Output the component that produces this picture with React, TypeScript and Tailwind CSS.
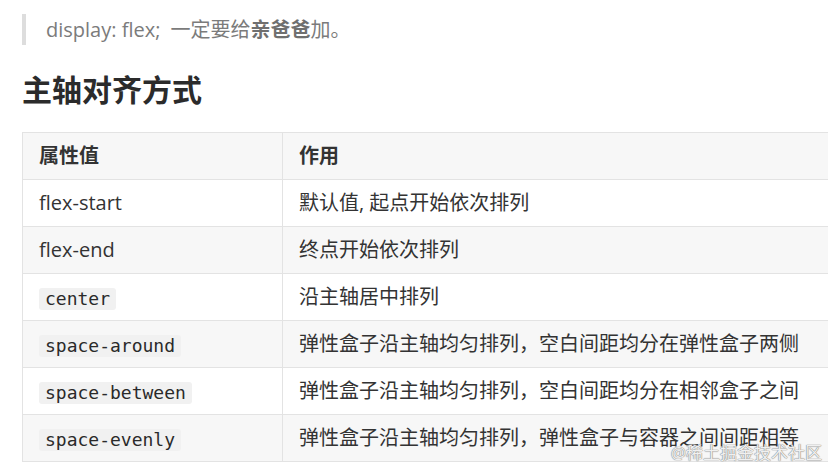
const rows: { name: string; code: boolean; desc: string }[] = [
  { name: "flex-start", code: false, desc: "默认值, 起点开始依次排列" },
  { name: "flex-end", code: false, desc: "终点开始依次排列" },
  { name: "center", code: true, desc: "沿主轴居中排列" },
  { name: "space-around", code: true, desc: "弹性盒子沿主轴均匀排列，空白间距均分在弹性盒子两侧" },
  { name: "space-between", code: true, desc: "弹性盒子沿主轴均匀排列，空白间距均分在相邻盒子之间" },
  { name: "space-evenly", code: true, desc: "弹性盒子沿主轴均匀排列，弹性盒子与容器之间间距相等" },
];

const App = () => {
  return (
    <div className="relative w-[828px] h-[472px] overflow-hidden bg-white font-['Open_Sans','Noto_Sans_CJK_SC',sans-serif] text-[#333]">
      {/* blockquote */}
      <div className="ml-[22px] mt-[14px] border-l-4 border-[#dddddd] pl-5 h-[31px] leading-[31px] text-[20px] text-[#7b7b7b]">
        display: flex;<span className="ml-[10px]">一定要给</span>
        <b className="font-bold text-[#6f6f6f]">亲爸爸</b>加。
      </div>

      <h2 className="ml-[22px] mt-[22px] text-[30px] leading-[45px] font-bold text-[#2b2b2b]">主轴对齐方式</h2>

      {/* table */}
      <div className="ml-[22px] mt-[20px] w-[840px] border-t border-l border-[#e3e3e3] text-[20px]">
        <div className="flex h-[47px] border-b border-[#e3e3e3] bg-[#f7f7f7] font-bold">
          <div className="w-[260px] border-r border-[#e3e3e3] pl-[16px] flex items-center">属性值</div>
          <div className="flex-1 pl-[16px] flex items-center">作用</div>
        </div>
        {rows.map((r, i) => (
          <div
            key={r.name}
            className={`flex h-[47px] border-b border-[#e3e3e3] ${i % 2 === 1 ? "bg-[#f7f7f7]" : "bg-white"}`}
          >
            <div className="w-[260px] border-r border-[#e3e3e3] pl-[16px] flex items-center">
              {r.code ? (
                <code className="mt-[4px] rounded-[3px] bg-[#f1f1f1] px-[6px] h-[22px] leading-[22px] text-[18px] font-['DejaVu_Sans_Mono',monospace] text-[#2a2a2a]">
                  {r.name}
                </code>
              ) : (
                r.name
              )}
            </div>
            <div className="flex-1 pl-[16px] flex items-center whitespace-nowrap">{r.desc}</div>
          </div>
        ))}
      </div>

      {/* watermark */}
      <div className="absolute right-[6px] top-[441px] text-[17px] leading-[24px] text-[#f0f0f0] [text-shadow:0_0_1px_#7a7a7a,0_0_1px_#7a7a7a]">
        @稀土掘金技术社区
      </div>
    </div>
  );
};

export default App;
